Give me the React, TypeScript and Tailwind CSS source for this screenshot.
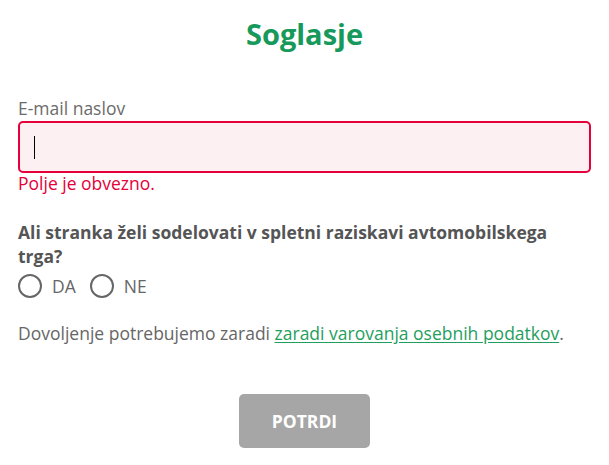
import { useState } from "react";

const App = () => {
  const [choice, setChoice] = useState<"da" | "ne" | null>(null);

  return (
    <div className="min-h-[465px] w-[609px] bg-white px-[18px] font-['Open_Sans',sans-serif] text-[17.5px] text-[#666666]">
      <h1 className="pt-[14px] text-center text-[29px] font-bold leading-[40px] text-[#16995a]">
        Soglasje
      </h1>

      <label className="mt-[42px] block leading-[24px] text-[#6b6b6b]">E-mail naslov</label>
      <div className="mt-px flex h-[52px] items-center rounded-[5px] border-2 border-[#e4003a] bg-[#fdf0f3] pl-[14px]">
        <span className="h-[23px] w-px bg-black" />
      </div>
      <p className="leading-[20px] text-[#e4003a]">Polje je obvezno.</p>

      <p className="mt-[28px] font-bold leading-[23.5px] text-[#555555]">
        Ali stranka želi sodelovati v spletni raziskavi avtomobilskega trga?
      </p>
      <div className="mt-[6px] flex h-[24px] items-center gap-[14px]">
        <button onClick={() => setChoice("da")} className="flex items-center gap-[10px]">
          <span className="flex h-[24px] w-[24px] items-center justify-center rounded-full border-2 border-[#666666]">
            {choice === "da" && <span className="h-[10px] w-[10px] rounded-full bg-[#666666]" />}
          </span>
          <span>DA</span>
        </button>
        <button onClick={() => setChoice("ne")} className="flex items-center gap-[10px]">
          <span className="flex h-[24px] w-[24px] items-center justify-center rounded-full border-2 border-[#666666]">
            {choice === "ne" && <span className="h-[10px] w-[10px] rounded-full bg-[#666666]" />}
          </span>
          <span>NE</span>
        </button>
      </div>

      <p className="mt-[23px] leading-[24px]">
        Dovoljenje potrebujemo zaradi{" "}
        <a href="#" className="text-[#1f9e5e] underline underline-offset-2">
          zaradi varovanja osebnih podatkov
        </a>
        .
      </p>

      <div className="mt-[49px] flex justify-center">
        <button className="h-[54px] w-[131px] rounded-[5px] bg-[#a6a6a6] font-bold text-white">
          POTRDI
        </button>
      </div>
    </div>
  );
};

export default App;
